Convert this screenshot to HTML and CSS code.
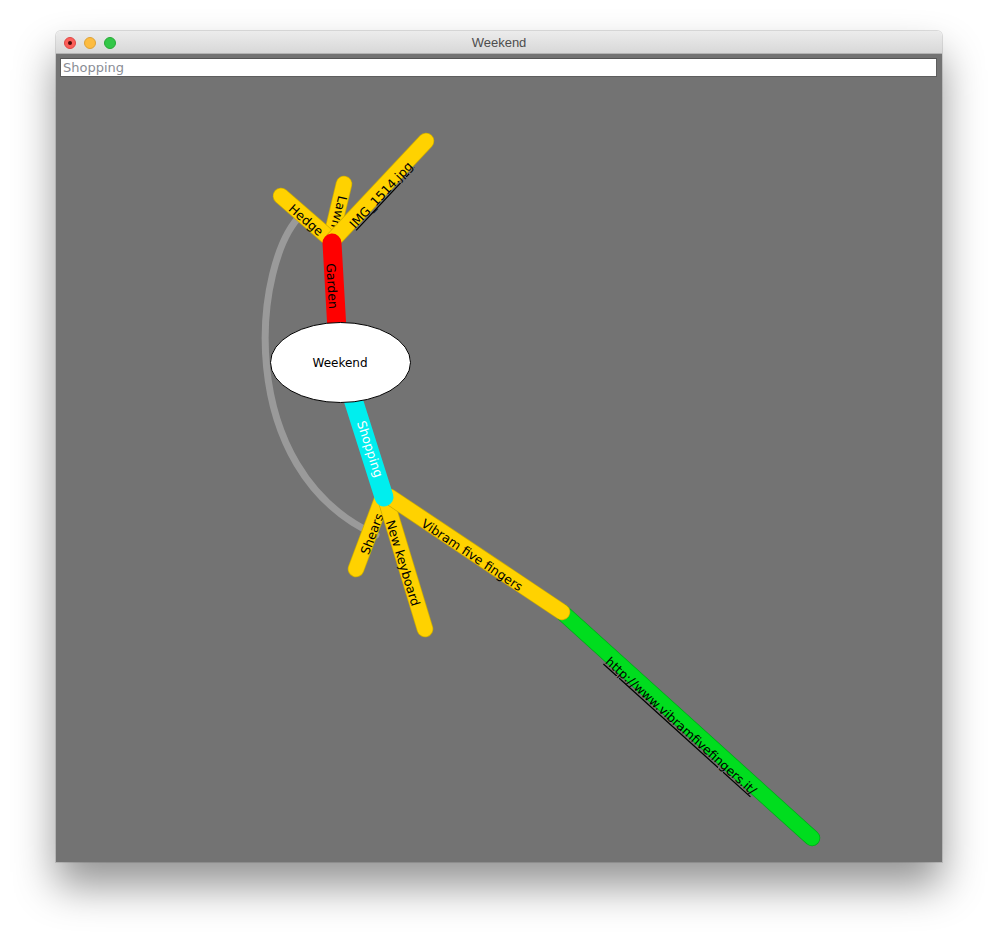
FILE: index.html
```html
<!DOCTYPE html>
<html>
<head>
<meta charset="utf-8">
<title>Weekend</title>
<link rel="stylesheet" href="styles.css">
</head>
<body>
<div class="window">
  <div class="titlebar">
    <div class="lights">
      <span class="light close"><span class="dot"></span></span>
      <span class="light minimize"></span>
      <span class="light zoom"></span>
    </div>
    <div class="title">Weekend</div>
  </div>
  <div class="content">
    <div class="search">Shopping</div>
    <svg class="map" width="886" height="785" viewBox="56 77 886 785" xmlns="http://www.w3.org/2000/svg">
      <!-- link -->
      <line class="edge-green-o" x1="562" y1="612" x2="812" y2="838"/>
      <line class="edge-green" x1="562" y1="612" x2="812" y2="838"/>
      <text class="label link" transform="translate(681 726) rotate(42.1)" dy="4.4">http://www.vibramfivefingers.it/</text>

      <!-- cross link arc -->
      <path class="arc" d="M302 214 C253 260, 232 470, 376 535"/>

      <!-- garden children -->
      <line class="edge-yellow-o" x1="331" y1="238" x2="344" y2="184"/>
      <line class="edge-yellow" x1="331" y1="238" x2="344" y2="184"/>
      <text class="label" transform="translate(339 212) rotate(103.5)" dy="4.4">Lawn</text>

      <line class="edge-yellow-o" x1="327" y1="236" x2="281" y2="196"/>
      <line class="edge-yellow" x1="327" y1="236" x2="281" y2="196"/>
      <text class="label" transform="translate(306 220) rotate(41)" dy="4.4">Hedge</text>

      <line class="edge-yellow-o" x1="333" y1="240" x2="426" y2="141"/>
      <line class="edge-yellow" x1="333" y1="240" x2="426" y2="141"/>
      <text class="label link" transform="translate(381 195) rotate(-46.8)" dy="4.4">IMG_1514.jpg</text>

      <!-- shopping children -->
      <line class="edge-yellow-o" x1="383" y1="497" x2="356" y2="569"/>
      <line class="edge-yellow" x1="383" y1="497" x2="356" y2="569"/>
      <text class="label" transform="translate(372 534) rotate(-69.4)" dy="4.4">Shears</text>

      <line class="edge-yellow-o" x1="385" y1="497" x2="425" y2="629"/>
      <line class="edge-yellow" x1="385" y1="497" x2="425" y2="629"/>
      <text class="label" transform="translate(403 563) rotate(73)" dy="4.4">New keyboard</text>

      <line class="edge-yellow-o" x1="390" y1="497" x2="562" y2="612"/>
      <line class="edge-yellow" x1="390" y1="497" x2="562" y2="612"/>
      <text class="label" transform="translate(472 555) rotate(33.8)" dy="4.4">Vibram five fingers</text>

      <!-- main branches -->
      <line class="edge-red" x1="337" y1="330" x2="332" y2="243"/>
      <text class="label" transform="translate(332 286) rotate(86.6)" dy="4.4">Garden</text>

      <line class="edge-cyan" x1="352" y1="396" x2="384" y2="497"/>
      <text class="label white" transform="translate(370 449) rotate(72)" dy="4.4">Shopping</text>

      <!-- root -->
      <ellipse class="root" cx="340.5" cy="362.5" rx="70" ry="40"/>
      <text class="label root-text" transform="translate(340 363)" dy="4.4">Weekend</text>
    </svg>
  </div>
</div>
</body>
</html>
```
FILE: styles.css
```css
html, body {
  margin: 0;
  padding: 0;
  background: #ffffff;
}
body {
  min-height: 942px;
  box-sizing: border-box;
  padding: 31px 0 0 56px;
  font-family: "DejaVu Sans", sans-serif;
}
.window {
  width: 886px;
  height: 831px;
  display: flex;
  flex-direction: column;
  border-radius: 5px 5px 0 0;
  box-shadow: 0 24px 42px rgba(0, 0, 0, 0.42), 0 0 0 1px rgba(0, 0, 0, 0.12);
  overflow: hidden;
}
.titlebar {
  height: 22px;
  flex: 0 0 22px;
  position: relative;
  display: flex;
  align-items: center;
  justify-content: center;
  background: linear-gradient(#ececec, #d8d8d8);
  border-bottom: 1px solid #b3b3b3;
}
.lights {
  position: absolute;
  left: 8px;
  top: 6px;
  display: flex;
  gap: 8px;
}
.light {
  width: 12px;
  height: 12px;
  border-radius: 50%;
  box-sizing: border-box;
  display: flex;
  align-items: center;
  justify-content: center;
}
.close {
  background: #fc5f5a;
  border: 1px solid #df4744;
}
.close .dot {
  width: 4px;
  height: 4px;
  border-radius: 50%;
  background: #4f0a08;
}
.minimize {
  background: #fdbc40;
  border: 1px solid #dea236;
}
.zoom {
  background: #33c748;
  border: 1px solid #27aa35;
}
.title {
  font-family: "Liberation Sans", Arial, sans-serif;
  font-size: 13px;
  color: #4d4d4d;
}
.content {
  flex: 1;
  display: flex;
  flex-direction: column;
  background: #737373;
}
.search {
  margin: 4px 5px 0 4px;
  height: 19px;
  box-sizing: border-box;
  background: #ffffff;
  border: 1px solid #5e5e5e;
  border-top-color: #555;
  padding: 0 0 0 2px;
  font-family: "DejaVu Sans", sans-serif;
  font-size: 13px;
  line-height: 17px;
  color: #8a8d95;
}
.map {
  display: block;
  flex: 0 0 auto;
}
.edge-yellow-o {
  stroke: #cfae00;
  stroke-width: 16.5;
  stroke-linecap: round;
}
.edge-yellow {
  stroke: #ffd200;
  stroke-width: 15;
  stroke-linecap: round;
}
.edge-green-o {
  stroke: #00a81a;
  stroke-width: 16.5;
  stroke-linecap: round;
}
.edge-green {
  stroke: #00dd1e;
  stroke-width: 15;
  stroke-linecap: round;
}
.edge-red {
  stroke: #ff0000;
  stroke-width: 19;
  stroke-linecap: round;
}
.edge-cyan {
  stroke: #00eeee;
  stroke-width: 19;
  stroke-linecap: round;
}
.arc {
  fill: none;
  stroke: #9a9a9a;
  stroke-width: 7;
  stroke-linecap: round;
}
.root {
  fill: #ffffff;
  stroke: #000000;
  stroke-width: 1;
}
.label {
  font-family: "DejaVu Sans", sans-serif;
  font-size: 12.5px;
  fill: #000000;
  text-anchor: middle;
}
.label.root-text {
  font-size: 12px;
}
.label.white {
  fill: #ffffff;
}
.label.link {
  text-decoration: underline;
}
```
